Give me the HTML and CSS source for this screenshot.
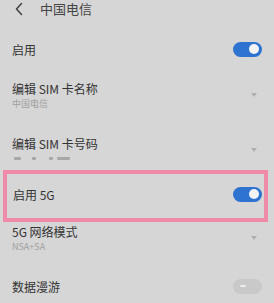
FILE: index.html
```html
<!DOCTYPE html>
<html lang="zh-CN">
<head>
    <meta charset="UTF-8">
    <meta name="viewport" content="width=device-width, initial-scale=1.0">
    <title>中国电信</title>
    <link rel="stylesheet" href="styles.css">
</head>
<body>

    <div class="header">
        <svg class="back" width="10" height="14" viewBox="0 0 10 14">
            <path d="M7.5 1.5 L2.5 7 L7.5 12.5" fill="none" stroke="#444" stroke-width="1.6" stroke-linecap="round" stroke-linejoin="round"/>
        </svg>
        <span class="title">中国电信</span>
    </div>

    <div class="row row-switch">
        <span class="label">启用</span>
        <span class="toggle on"></span>
    </div>

    <div class="row row-two first">
        <div class="texts">
            <div class="label">编辑 SIM 卡名称</div>
            <div class="sub">中国电信</div>
        </div>
        <span class="arrow"></span>
    </div>

    <div class="row row-two second">
        <div class="texts">
            <div class="label">编辑 SIM 卡号码</div>
            <div class="sub masked">
                <span class="mask m1"></span>
                <span class="mask m2"></span>
                <span class="mask m3"></span>
                <span class="mask m4"></span>
            </div>
        </div>
        <span class="arrow"></span>
    </div>

    <!-- highlighted row -->
    <div class="highlight">
        <div class="row row-inner">
            <span class="label">启用 5G</span>
            <span class="toggle on"></span>
        </div>
    </div>

    <div class="row row-two third">
        <div class="texts">
            <div class="label">5G 网络模式</div>
            <div class="sub">NSA+SA</div>
        </div>
        <span class="arrow"></span>
    </div>

    <div class="row row-switch">
        <span class="label">数据漫游</span>
        <span class="toggle off"></span>
    </div>

</body>
</html>
```

FILE: styles.css
```css
body {
    margin: 0;
    padding: 0;
    background-color: #d6d6d6;
    font-family: "Noto Sans CJK SC", "Noto Sans", sans-serif;
    color: #333;
    width: 274px;
    height: 303px;
    overflow: hidden;
}

.header {
    height: 25px;
    padding-top: 2px;
    display: flex;
    align-items: flex-start;
}

.back {
    margin: 0 0 0 14px;
}

.title {
    margin-left: 16px;
    font-size: 13px;
    line-height: 14px;
    color: #444;
}

.row {
    display: flex;
    align-items: center;
    justify-content: space-between;
    padding: 0 12px;
}

.label {
    font-size: 12px;
    line-height: 15px;
    color: #333;
}

.sub {
    margin-top: 2px;
    font-size: 9px;
    line-height: 11px;
    color: #a0a0a0;
}

.row-switch {
    height: 44px;
}

.row-two.first {
    padding-top: 10px;
    padding-bottom: 17px;
}

.row-two.second {
    padding-top: 10px;
    padding-bottom: 6px;
}

.row-two.third {
    padding-top: 2px;
    padding-bottom: 12px;
}

.arrow {
    width: 0;
    height: 0;
    margin-right: 5px;
    border-left: 3px solid transparent;
    border-right: 3px solid transparent;
    border-top: 4px solid #b0b0b0;
}

.masked {
    display: flex;
    align-items: center;
    height: 11px;
}

.mask {
    height: 3px;
    background-color: #a8a8a8;
    border-radius: 1px;
}

.m1 { width: 7px; margin-left: 2px; }
.m2 { width: 4px; margin-left: 11px; }
.m3 { width: 4px; margin-left: 13px; }
.m4 { width: 13px; margin-left: 4px; }

.toggle {
    position: relative;
    width: 29px;
    height: 15px;
    border-radius: 8px;
}

.toggle.on {
    background-color: #2f73d0;
}

.toggle.on::after {
    content: "";
    position: absolute;
    right: 3px;
    top: 2.5px;
    width: 10px;
    height: 10px;
    border-radius: 50%;
    background-color: #f4f4f4;
}

.toggle.off {
    background-color: #c9c9c9;
}

.toggle.off::after {
    content: "";
    position: absolute;
    left: 7px;
    top: 6.5px;
    width: 6px;
    height: 2px;
    border-radius: 1px;
    background-color: #ececec;
}

.highlight {
    margin: 0 6px 0 3px;
    height: 44px;
    border: 4px solid #f08aa9;
}

.row-inner {
    height: 40px;
    padding: 0 2px 4px 6px;
}
```
